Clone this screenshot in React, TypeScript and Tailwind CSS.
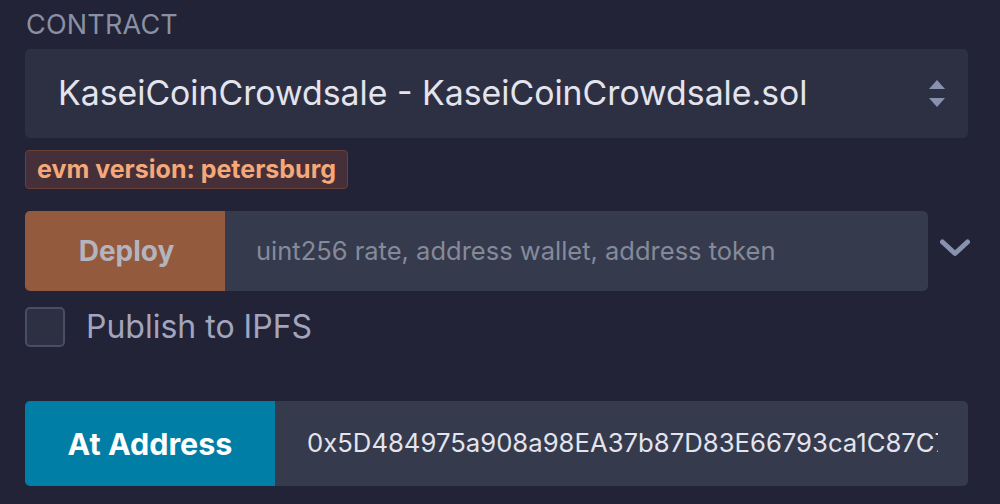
import React from "react";

export default function App() {
  return (
    <div
      className="w-[1000px] h-[504px] bg-[#222336] overflow-hidden"
      style={{ fontFamily: "Inter, 'Noto Sans', sans-serif" }}
    >
      <div className="pl-[25px] pr-[32px]">
        <div className="h-[49px] pt-[8px] pl-[1px] text-[27px] leading-[34px] text-[#8a8fa3] tracking-[0.2px]">
          CONTRACT
        </div>
        <div className="h-[89px] rounded-[5px] bg-[#2d3042] flex items-center pl-[33px] pr-[22px]">
          <span className="flex-1 text-[33.8px] text-[#e3e4ee] whitespace-nowrap">
            KaseiCoinCrowdsale - KaseiCoinCrowdsale.sol
          </span>
          <svg width="18" height="30" viewBox="0 0 18 30" className="shrink-0">
            <path d="M9 1 L17 10 L1 10 Z" fill="#8891ae" />
            <path d="M9 28 L17 19 L1 19 Z" fill="#8891ae" />
          </svg>
        </div>
        <div className="mt-[12px] flex">
          <div className="h-[39px] px-[11px] rounded-[4px] bg-[#45303a] border border-[#6b3f35] flex items-center text-[25px] font-bold text-[#f5a878] whitespace-nowrap">
            evm version: petersburg
          </div>
        </div>
        <div className="mt-[22px] flex items-center">
          <div className="flex h-[80px] w-[903px] shrink-0">
            <div className="w-[200px] rounded-l-[5px] bg-[#935a3e] flex items-center justify-center text-[28px] font-bold text-[#b4b4be] pl-[3px]">
              Deploy
            </div>
            <div className="flex-1 rounded-r-[5px] bg-[#353a4d] flex items-center pl-[31px] text-[25.5px] text-[#858a9b] whitespace-nowrap">
              uint256 rate, address wallet, address token
            </div>
          </div>
          <svg width="30" height="22" viewBox="0 0 30 22" className="ml-[10px] mt-[-6px] shrink-0 overflow-visible">
            <path d="M4.5 5 L17 16.5 L29.5 5" stroke="#8891ae" strokeWidth="5" fill="none" strokeLinecap="round" strokeLinejoin="round" />
          </svg>
        </div>
        <div className="mt-[16px] h-[40px] flex items-center">
          <div className="w-[40px] h-[40px] rounded-[5px] bg-[#2d3042] border-[2px] border-[#4a4e62]" />
          <span className="ml-[21px] text-[32px] leading-[40px] text-[#a3a5be]">Publish to IPFS</span>
        </div>
        <div className="mt-[54px] flex h-[85px]">
          <div className="w-[250px] rounded-l-[5px] bg-[#007ea5] flex items-center justify-center text-[30.5px] font-bold text-white">
            At Address
          </div>
          <div className="flex-1 rounded-r-[5px] bg-[#353a4d] flex items-center pl-[32px] pr-[30px] overflow-hidden">
            <span className="block overflow-hidden whitespace-nowrap text-[25.7px] text-[#e3e4ee]">
              0x5D484975a908a98EA37b87D83E66793ca1C87C71F
            </span>
          </div>
        </div>
      </div>
    </div>
  );
}
